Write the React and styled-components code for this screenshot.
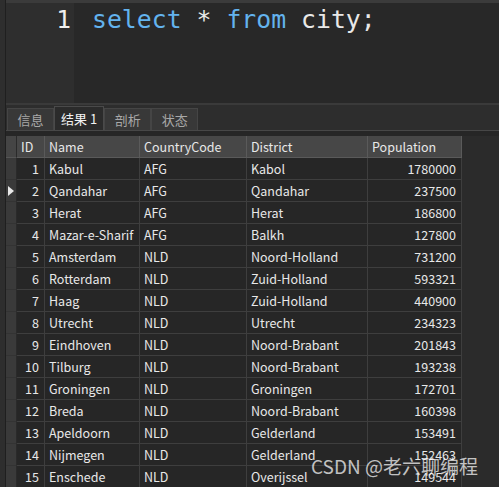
import React from 'react';
import styled, { createGlobalStyle } from 'styled-components';

const GlobalStyle = createGlobalStyle`
  html, body {
    margin: 0;
    padding: 0;
    background: #2b2b2b;
    overflow: hidden;
  }
`;

const rows = [
  [1, 'Kabul', 'AFG', 'Kabol', 1780000],
  [2, 'Qandahar', 'AFG', 'Qandahar', 237500],
  [3, 'Herat', 'AFG', 'Herat', 186800],
  [4, 'Mazar-e-Sharif', 'AFG', 'Balkh', 127800],
  [5, 'Amsterdam', 'NLD', 'Noord-Holland', 731200],
  [6, 'Rotterdam', 'NLD', 'Zuid-Holland', 593321],
  [7, 'Haag', 'NLD', 'Zuid-Holland', 440900],
  [8, 'Utrecht', 'NLD', 'Utrecht', 234323],
  [9, 'Eindhoven', 'NLD', 'Noord-Brabant', 201843],
  [10, 'Tilburg', 'NLD', 'Noord-Brabant', 193238],
  [11, 'Groningen', 'NLD', 'Groningen', 172701],
  [12, 'Breda', 'NLD', 'Noord-Brabant', 160398],
  [13, 'Apeldoorn', 'NLD', 'Gelderland', 153491],
  [14, 'Nijmegen', 'NLD', 'Gelderland', 152463],
  [15, 'Enschede', 'NLD', 'Overijssel', 149544],
];

const tabs = ['信息', '结果 1', '剖析', '状态'];

const App = () => (
  <Frame>
    <GlobalStyle />
    <Editor>
      <Gutter>1</Gutter>
      <Code>
        <Kw>select</Kw> * <Kw>from</Kw> city;
      </Code>
    </Editor>
    <TabBar>
      {tabs.map((t, i) => (
        <Tab key={t} active={i === 1}>{t}</Tab>
      ))}
    </TabBar>
    <Gap />
    <Grid>
      <Marker head />
      <Head>ID</Head>
      <Head>Name</Head>
      <Head>CountryCode</Head>
      <Head>District</Head>
      <Head>Population</Head>
      {rows.map((r, i) => (
        <React.Fragment key={r[0]}>
          <Marker>{i === 1 && <Arrow />}</Marker>
          <Cell num>{r[0]}</Cell>
          <Cell>{r[1]}</Cell>
          <Cell>{r[2]}</Cell>
          <Cell>{r[3]}</Cell>
          <Cell num>{r[4]}</Cell>
        </React.Fragment>
      ))}
    </Grid>
    <Watermark>CSDN @老六聊编程</Watermark>
  </Frame>
);

export default App;

const Frame = styled.div`
  position: relative;
  width: 499px;
  height: 487px;
  overflow: hidden;
  background: #2b2b2b;
  border-left: 5px solid #2e2e2e;
  box-sizing: border-box;
  font-family: "Noto Sans CJK SC", "Noto Sans", sans-serif;
  &::before {
    content: '';
    position: absolute;
    left: 0;
    top: 0;
    bottom: 0;
    width: 1px;
    background: #1f1f1f;
  }
`;

const Editor = styled.div`
  display: flex;
  height: 100px;
  border-top: 3px solid #3b3b3b;
  border-bottom: 2px solid #3a3a3a;
  margin-left: 1px;
`;

const Gutter = styled.div`
  width: 68px;
  background: #2e2e2e;
  color: #f0f0f0;
  font-family: "DejaVu Sans Mono", monospace;
  font-size: 24.5px;
  text-align: right;
  padding: 2px 3px 0 0;
  box-sizing: border-box;
  line-height: 30px;
`;

const Code = styled.div`
  flex: 1;
  background: #282828;
  color: #e8e8e8;
  font-family: "DejaVu Sans Mono", monospace;
  font-size: 24.8px;
  line-height: 30px;
  padding: 2px 0 0 18px;
  white-space: pre;
`;

const Kw = styled.span`
  color: #63b3ee;
`;

const TabBar = styled.div`
  display: flex;
  align-items: flex-end;
  height: 25px;
  padding-left: 2px;
  background: #2d2d2d;
  border-bottom: 1px solid #474747;
`;

const Tab = styled.div`
  height: ${p => (p.active ? 24 : 22)}px;
  box-sizing: border-box;
  padding: 0 6px;
  min-width: 47px;
  display: flex;
  align-items: center;
  justify-content: center;
  font-size: 13px;
  color: ${p => (p.active ? '#f2f2f2' : '#a8a8a8')};
  background: ${p => (p.active ? '#2b2b2b' : '#383838')};
  border: 1px solid ${p => (p.active ? '#4a4a4a' : '#454545')};
  border-bottom: none;
`;

const Gap = styled.div`
  height: 5px;
  background: #262626;
`;

const Grid = styled.div`
  display: grid;
  grid-template-columns: 11px 28px 95px 107px 121px 94px;
  grid-auto-rows: 22px;
  width: max-content;
  margin-left: 1px;
  font-size: 12.5px;
  background: #262626;
`;

const Marker = styled.div`
  background: ${p => (p.head ? '#454545' : '#3a3a3a')};
  border-right: 1px solid #2a2a2a;
  border-bottom: 1px solid ${p => (p.head ? '#555' : '#333')};
  display: flex;
  align-items: center;
  box-sizing: border-box;
`;

const Arrow = styled.div`
  width: 0;
  height: 0;
  margin-left: 2px;
  border-top: 5px solid transparent;
  border-bottom: 5px solid transparent;
  border-left: 6px solid #e8e8e8;
`;

const Head = styled.div`
  background: #474747;
  color: #e8e8e8;
  border-right: 1px solid #5a5a5a;
  border-bottom: 1px solid #5a5a5a;
  box-sizing: border-box;
  padding-left: 4px;
  display: flex;
  align-items: center;
  white-space: nowrap;
`;

const Cell = styled.div`
  color: #e8e8e8;
  border-right: 1px solid #3e3e3e;
  border-bottom: 1px solid #3e3e3e;
  box-sizing: border-box;
  padding: 0 ${p => (p.num ? 5 : 0)}px 0 4px;
  display: flex;
  align-items: center;
  justify-content: ${p => (p.num ? 'flex-end' : 'flex-start')};
  white-space: nowrap;
  overflow: hidden;
`;

const Watermark = styled.div`
  position: absolute;
  left: 306px;
  top: 452px;
  font-size: 19px;
  color: rgba(255, 255, 255, 0.72);
  font-family: "Noto Sans CJK SC", sans-serif;
  white-space: nowrap;
`;
